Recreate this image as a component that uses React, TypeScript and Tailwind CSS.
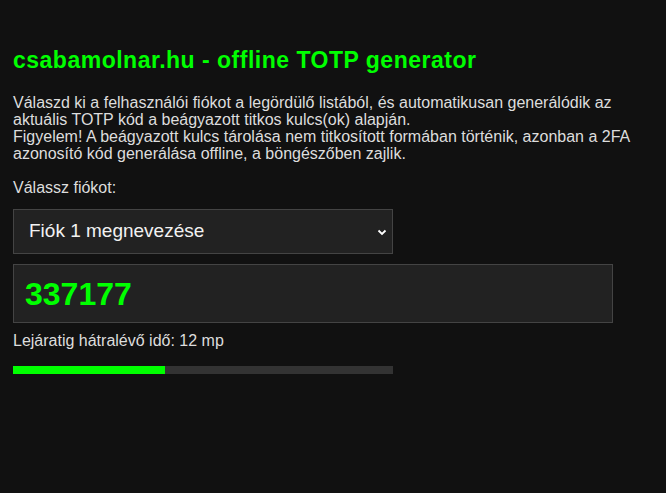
import React from 'react';

const App: React.FC = () => {
  const remaining = 12;
  const pct = (remaining / 30) * 100;

  return (
    <div className="min-h-[493px] w-full bg-[#111111] px-[13px] pt-[47px] text-[#dddddd] font-['Liberation_Sans',Arial,sans-serif]">
      <h1 className="text-[23px] leading-[26px] tracking-[0.5px] font-bold text-[#00ff00]">
        csabamolnar.hu - offline TOTP generator
      </h1>

      <p className="mt-[21px] text-[16px] leading-[17px]">
        Válaszd ki a felhasználói fiókot a legördülő listából, és automatikusan generálódik az aktuális TOTP kód a beágyazott titkos kulcs(ok) alapján.
        <br />
        Figyelem! A beágyazott kulcs tárolása nem titkosított formában történik, azonban a 2FA azonosító kód generálása offline, a böngészőben zajlik.
      </p>

      <label className="mt-[17px] block text-[16px] leading-[17px]">Válassz fiókot:</label>

      <div className="mt-[13px] flex h-[45px] w-[380px] items-center justify-between border border-[#444444] bg-[#222222] pl-[15px] pr-[5px]">
        <span className="text-[19px] text-[#f2f2f2]">Fiók 1 megnevezése</span>
        <svg width="10" height="10" viewBox="0 0 10 10" className="text-white">
          <path d="M1.5 3.5 L5 7 L8.5 3.5" fill="none" stroke="currentColor" strokeWidth="1.8" />
        </svg>
      </div>

      <div className="mt-[10px] flex h-[59px] w-[600px] items-center border border-[#444444] bg-[#222222] px-[11px]">
        <span className="text-[32px] font-bold leading-none text-[#00ff00]">337177</span>
      </div>

      <p className="mt-[9px] text-[16px] leading-[17px]">Lejáratig hátralévő idő: {remaining} mp</p>

      <div className="mt-[17px] h-[8px] w-[380px] bg-[#333333]">
        <div className="h-full bg-[#00ff00]" style={{ width: `${pct}%` }} />
      </div>
    </div>
  );
};

export default App;
